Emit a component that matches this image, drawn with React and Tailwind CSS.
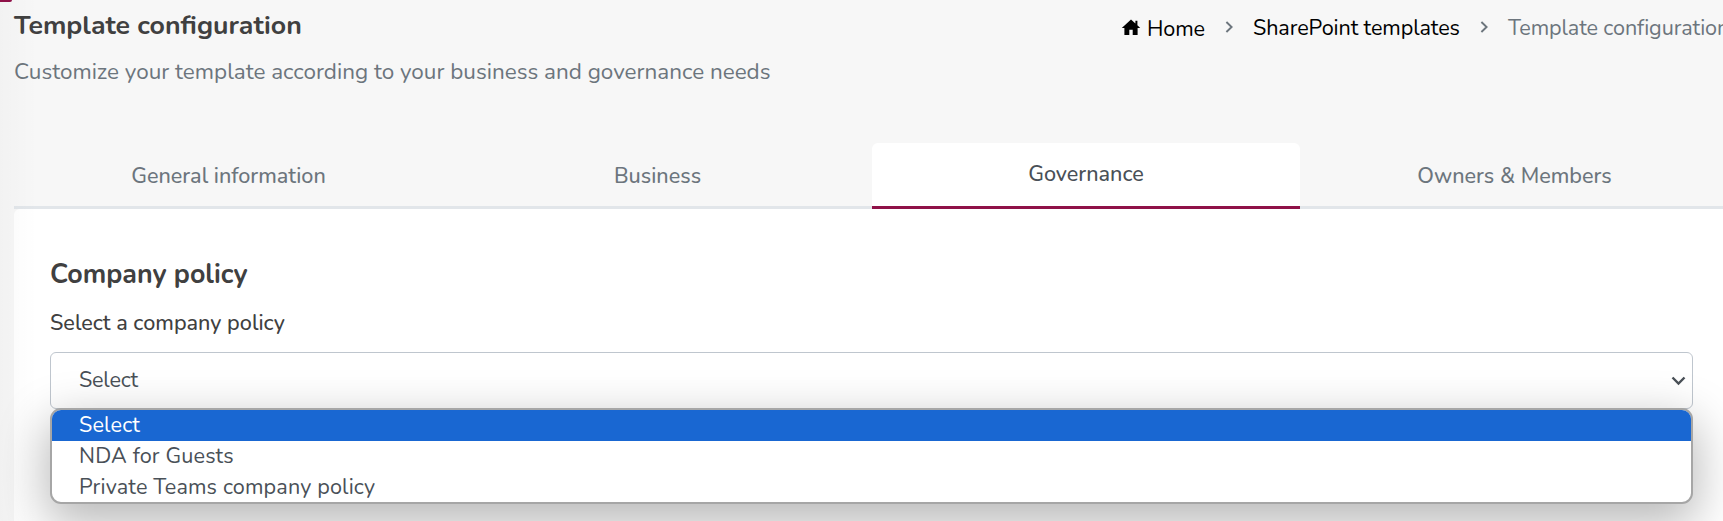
import React from "react";

const tabs = [
  { label: "General information" },
  { label: "Business" },
  { label: "Governance", active: true },
  { label: "Owners & Members" },
];

const options = [
  { label: "Select", selected: true },
  { label: "NDA for Guests" },
  { label: "Private Teams company policy" },
];

function HomeIcon() {
  return (
    <svg className="w-5 h-4 mt-[5px] shrink-0" viewBox="0 0 20 16" fill="#000">
      <path d="M10 .4.8 9.1h2.6V16h4.9v-5.2h3.4V16h4.9V9.1h2.6L16.4 6.3V1.8h-2v2.6z" />
    </svg>
  );
}

function Chevron() {
  return (
    <svg className="w-[9px] h-3 mt-[7px] shrink-0" viewBox="0 0 9 12" fill="none" stroke="#6c757d" strokeWidth="1.9">
      <path d="m1.4 1 5.2 5-5.2 5" />
    </svg>
  );
}

function Breadcrumb() {
  return (
    <nav className="flex items-start pt-[14px] text-[21.6px] leading-7 tracking-[-0.1px] text-black whitespace-nowrap w-[602px] shrink-0">
      <span className="flex w-[104px] shrink-0">
        <HomeIcon />
        <a className="ml-[6px] mt-px">Home</a>
      </span>
      <Chevron />
      <a className="ml-[19px] w-[227px] shrink-0">SharePoint templates</a>
      <Chevron />
      <span className="ml-[19px] text-[#6c757d]">Template configuration</span>
    </nav>
  );
}

function Header() {
  return (
    <header className="flex justify-between h-[143px] pl-[14px]">
      <div className="pt-[7px]">
        <h1 className="text-[26.7px] leading-9 font-bold text-[#404040]">Template configuration</h1>
        <p className="mt-[14px] text-[22.47px] leading-[30px] text-[#6c757d]">
          Customize your template according to your business and governance needs
        </p>
      </div>
      <Breadcrumb />
    </header>
  );
}

function Tabs() {
  return (
    <ul className="flex ml-[14px] w-[1715px] h-[66px] text-[21.6px] leading-[30px] font-medium text-center">
      {tabs.map((tab) => (
        <li
          key={tab.label}
          className={
            tab.active
              ? "w-[428px] pt-[16px] bg-white border-b-[3px] border-[#8f1148] rounded-t-md text-[#495057]"
              : "w-[429px] pt-[18px] border-b-[3px] border-[#e2e6ea] text-[#6c757d]"
          }
        >
          {tab.label}
        </li>
      ))}
    </ul>
  );
}

function PolicySelect() {
  return (
    <div className="relative w-[1643px]">
      <div className="flex items-center justify-between h-[57px] pl-[28px] pr-[6px] border border-[#bfc6ce] rounded-md bg-white">
        <span className="text-[21.6px] leading-[30px] tracking-[-0.2px] text-[#495057] pb-[1px]">Select</span>
        <svg className="w-[15px] h-[10px]" viewBox="0 0 15 10" fill="none" stroke="#495057" strokeWidth="2.4">
          <path d="m1.5 1.5 6 6 6-6" />
        </svg>
      </div>

      {/* Open option list */}
      <ul className="absolute left-0 top-[56px] w-full h-[96px] border-2 border-[#a6a6a6] rounded-[11px] bg-white overflow-hidden text-[21.6px] leading-[31px] tracking-[0.15px] text-[#495057] shadow-[0_16px_48px_4px_rgba(0,0,0,0.28)]">
        {options.map((option) => (
          <li
            key={option.label}
            className={option.selected ? "h-[31px] pl-[27px] bg-[#1967d2] text-white" : "h-[31px] pl-[27px]"}
          >
            {option.label}
          </li>
        ))}
      </ul>
    </div>
  );
}

export default function App() {
  return (
    <div className="relative w-full h-[521px] overflow-hidden bg-[#f7f7f7] font-['Nunito','Lato',sans-serif]">
      <Header />
      <Tabs />
      <main className="ml-[14px] h-[312px] pl-9 pt-[47px] bg-white rounded-tl-md">
        <h2 className="text-[26.8px] leading-9 font-bold text-[#404040]">Company policy</h2>
        <label className="block mt-[16px] mb-[14px] text-[21.6px] leading-[30px] font-medium text-[#404040]">
          Select a company policy
        </label>
        <PolicySelect />
      </main>

      {/* Side menu edge and the shade it casts */}
      <div className="absolute left-0 top-0 w-[38px] h-full bg-linear-to-r from-black/2 to-transparent pointer-events-none" />
      <div className="absolute left-0 top-0 w-3 h-[2px] rounded-br-[3px] bg-[#8f1148]" />
    </div>
  );
}
